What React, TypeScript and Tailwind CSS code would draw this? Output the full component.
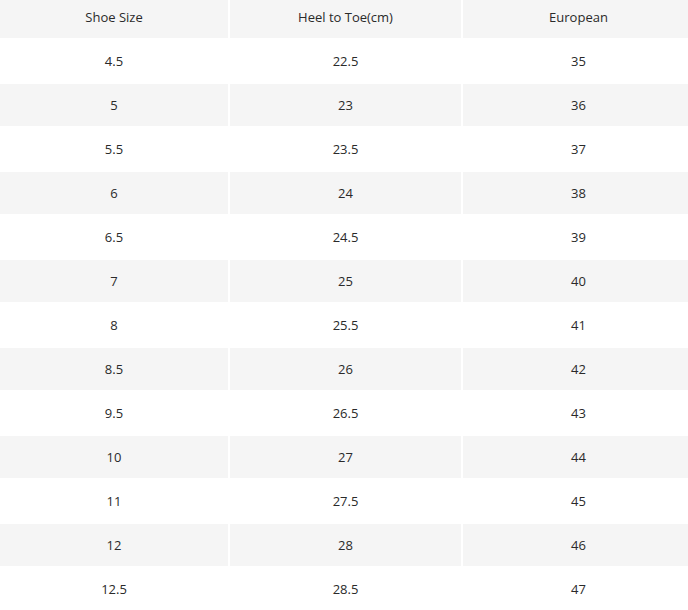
import React from "react";

const rows: [string, string, string][] = [
  ["4.5", "22.5", "35"],
  ["5", "23", "36"],
  ["5.5", "23.5", "37"],
  ["6", "24", "38"],
  ["6.5", "24.5", "39"],
  ["7", "25", "40"],
  ["8", "25.5", "41"],
  ["8.5", "26", "42"],
  ["9.5", "26.5", "43"],
  ["10", "27", "44"],
  ["11", "27.5", "45"],
  ["12", "28", "46"],
  ["12.5", "28.5", "47"],
];

const gridCols = "grid grid-cols-[228px_231px_231px] gap-x-[2px]";

export default function App() {
  return (
    <div
      className="w-[688px] h-[610px] overflow-hidden bg-white text-[13px] text-[#2a2a2a]"
      style={{ fontFamily: '"Open Sans", "Noto Sans", sans-serif' }}
    >
      {/* header */}
      <div className={`${gridCols} pb-px`}>
        {["Shoe Size", "Heel to Toe(cm)", "European"].map((h) => (
          <div key={h} className="flex h-[38px] items-center justify-center bg-[#f5f5f5] pb-[2px]">
            {h}
          </div>
        ))}
      </div>

      {/* body */}
      {rows.map((r, i) => (
        <div key={r[0]} className={`${gridCols} py-px`}>
          {r.map((v, j) => (
            <div
              key={j}
              className={`flex h-[42px] items-center justify-center pt-[2px] ${i % 2 === 1 ? "bg-[#f5f5f5]" : "bg-white"}`}
            >
              {v}
            </div>
          ))}
        </div>
      ))}
    </div>
  );
}
